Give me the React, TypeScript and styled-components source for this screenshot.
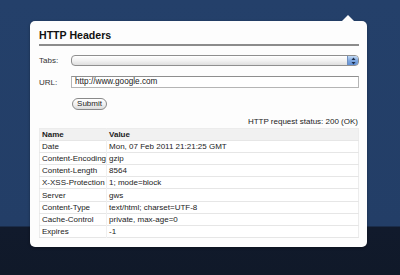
import styled, { createGlobalStyle } from "styled-components";

const GlobalStyle = createGlobalStyle`
  html, body {
    margin: 0;
    padding: 0;
    background: #111a2c;
  }
  * {
    box-sizing: border-box;
  }
`;

const Page = styled.div`
  width: 400px;
  height: 275px;
  overflow: hidden;
  padding: 21px 0 0 30px;
  background: linear-gradient(
    to bottom,
    #24406a 0,
    #233e67 226px,
    #111a2c 227px,
    #101929 275px
  );
  font-family: "Liberation Sans", Arial, Helvetica, sans-serif;
`;

const Popup = styled.div`
  position: relative;
  width: 337px;
  height: 226px;
  background: #fdfdfd;
  border-radius: 5px;
  padding: 7px 8px 0 9px;
  box-shadow: 0 1px 3px rgba(0, 0, 0, 0.35);
  &::before {
    content: "";
    position: absolute;
    top: -6px;
    right: 13px;
    border-left: 6px solid transparent;
    border-right: 6px solid transparent;
    border-bottom: 6px solid #fdfdfd;
  }
`;

const Title = styled.h1`
  margin: 0;
  font-size: 10.6px;
  line-height: 14px;
  font-weight: 700;
  color: #111;
  padding-bottom: 2px;
  border-bottom: 2px solid #8c8c8c;
`;

const FormRow = styled.div<{ $top: number; $height: number }>`
  display: flex;
  align-items: center;
  margin-top: ${(p) => p.$top}px;
  height: ${(p) => p.$height}px;
`;

const Label = styled.label`
  width: 32px;
  font-size: 8px;
  color: #333;
`;

const Select = styled.div`
  flex: 1;
  height: 11px;
  border: 1px solid #8f8f8f;
  border-radius: 4px;
  background: linear-gradient(to bottom, #ffffff 0%, #f2f2f2 50%, #dedede 100%);
  display: flex;
  justify-content: flex-end;
  box-shadow: inset 0 1px 0 #fff;
`;

const Stepper = styled.div`
  width: 11px;
  height: 100%;
  border-radius: 0 3px 3px 0;
  background: linear-gradient(to bottom, #c4dbf5 0%, #7fa8e0 50%, #5f8fd4 100%);
  border-left: 1px solid #6f8fbf;
  display: flex;
  align-items: center;
  justify-content: center;
`;

const Input = styled.div`
  flex: 1;
  height: 12px;
  border: 1px solid #b5b5b5;
  border-top-color: #8e8e8e;
  background: #fff;
  font-size: 8.2px;
  line-height: 10px;
  padding-left: 3px;
  color: #222;
`;

const SubmitButton = styled.button`
  margin-left: 33px;
  width: 35px;
  height: 12px;
  padding: 0;
  border: 1px solid #8a8a8a;
  border-radius: 6px;
  background: linear-gradient(to bottom, #ffffff 0%, #f1f1f1 55%, #dcdcdc 100%);
  font-family: "Liberation Sans", Arial, sans-serif;
  font-size: 8px;
  line-height: 10px;
  color: #222;
`;

const Status = styled.div`
  margin-top: 7px;
  height: 10px;
  font-size: 8px;
  line-height: 10px;
  text-align: right;
  color: #222;
  padding-right: 1px;
`;

const Table = styled.table`
  width: 320px;
  margin-top: 1px;
  border-collapse: collapse;
  font-size: 8px;
  color: #222;
  border: 1px solid #ececec;
`;

const Row = styled.tr<{ $head?: boolean }>`
  height: 12.1px;
  background: ${(p) => (p.$head ? "#f1f1f1" : "#fff")};
  border-bottom: 1px solid #e6e6e6;
`;

const Cell = styled.td<{ $head?: boolean }>`
  padding: 0 0 0 2px;
  line-height: 11px;
  font-weight: ${(p) => (p.$head ? 700 : 400)};
  white-space: nowrap;
  &:first-child {
    width: 67px;
    border-right: 1px solid #f0f0f0;
  }
`;

const headers: [string, string][] = [
  ["Date", "Mon, 07 Feb 2011 21:21:25 GMT"],
  ["Content-Encoding", "gzip"],
  ["Content-Length", "8564"],
  ["X-XSS-Protection", "1; mode=block"],
  ["Server", "gws"],
  ["Content-Type", "text/html; charset=UTF-8"],
  ["Cache-Control", "private, max-age=0"],
  ["Expires", "-1"],
];

export default function App() {
  return (
    <>
      <GlobalStyle />
      <Page>
        <Popup>
          <Title>HTTP Headers</Title>
          <FormRow $top={9} $height={11}>
            <Label>Tabs:</Label>
            <Select>
              <Stepper>
                <svg width="5" height="8" viewBox="0 0 5 8">
                  <path d="M2.5 0.5 L4.5 3 L0.5 3 Z" fill="#1c2d4a" />
                  <path d="M2.5 7.5 L4.5 5 L0.5 5 Z" fill="#1c2d4a" />
                </svg>
              </Stepper>
            </Select>
          </FormRow>
          <FormRow $top={10} $height={12}>
            <Label>URL:</Label>
            <Input>http://www.google.com</Input>
          </FormRow>
          <FormRow $top={10} $height={12}>
            <SubmitButton>Submit</SubmitButton>
          </FormRow>
          <Status>HTTP request status: 200 (OK)</Status>
          <Table>
            <tbody>
              <Row $head>
                <Cell $head>Name</Cell>
                <Cell $head>Value</Cell>
              </Row>
              {headers.map(([name, value]) => (
                <Row key={name}>
                  <Cell>{name}</Cell>
                  <Cell>{value}</Cell>
                </Row>
              ))}
            </tbody>
          </Table>
        </Popup>
      </Page>
    </>
  );
}
